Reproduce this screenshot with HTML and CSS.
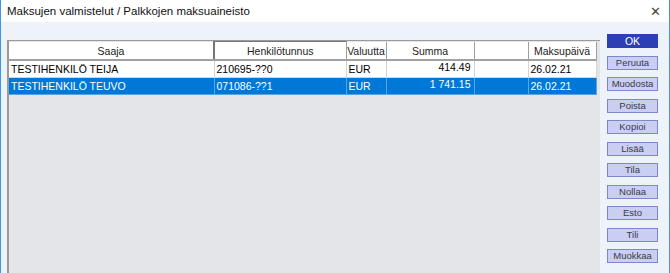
FILE: index.html
```html
<!DOCTYPE html>
<html lang="fi">
<head>
  <meta charset="UTF-8">
  <title>Maksujen valmistelut / Palkkojen maksuaineisto</title>
  <link rel="stylesheet" href="styles.css">
</head>
<body>
  <div class="window">
    <div class="titlebar">
      <span class="title">Maksujen valmistelut / Palkkojen maksuaineisto</span>
      <span class="close">✕</span>
    </div>
    <div class="content">
      <div class="grid">
        <table>
          <colgroup>
            <col style="width:205px">
            <col style="width:132px">
            <col style="width:40px">
            <col style="width:88px">
            <col style="width:54px">
            <col style="width:68px">
          </colgroup>
          <thead>
            <tr>
              <th>Saaja</th>
              <th class="active">Henkilötunnus</th>
              <th>Valuutta</th>
              <th>Summa</th>
              <th></th>
              <th>Maksupäivä</th>
            </tr>
          </thead>
          <tbody>
            <tr>
              <td>TESTIHENKILÖ TEIJA</td>
              <td>210695-??0</td>
              <td>EUR</td>
              <td class="num">414.49</td>
              <td></td>
              <td>26.02.21</td>
            </tr>
            <tr class="selected">
              <td>TESTIHENKILÖ TEUVO</td>
              <td>071086-??1</td>
              <td>EUR</td>
              <td class="num">1 741.15</td>
              <td></td>
              <td>26.02.21</td>
            </tr>
          </tbody>
        </table>
      </div>
      <div class="buttons">
        <button class="btn primary">OK</button>
        <button class="btn">Peruuta</button>
        <button class="btn">Muodosta</button>
        <button class="btn">Poista</button>
        <button class="btn">Kopioi</button>
        <button class="btn">Lisää</button>
        <button class="btn">Tila</button>
        <button class="btn">Nollaa</button>
        <button class="btn">Esto</button>
        <button class="btn">Tili</button>
        <button class="btn">Muokkaa</button>
      </div>
    </div>
  </div>
</body>
</html>
```

FILE: styles.css
```css
body {
  margin: 0;
  font-family: "Liberation Sans", Arial, sans-serif;
  font-size: 10.5px;
  color: #000;
}
.window {
  width: 670px;
  height: 273px;
  box-sizing: border-box;
  border-left: 1px solid #3c97e6;
  border-right: 1px solid #3c97e6;
  background-color: #eef2f9;
  overflow: hidden;
}
.titlebar {
  height: 22px;
  background-color: #fff;
  display: flex;
  align-items: center;
  justify-content: space-between;
  padding: 0 8px 0 6px;
}
.title {
  font-size: 11.5px;
  color: #111;
}
.close {
  font-size: 13px;
  color: #444;
}
.content {
  display: flex;
  padding-top: 12px;
  padding-left: 6px;
  height: 239px;
}
.grid {
  margin-top: 6px;
  width: 591px;
  background-color: #e3e5e9;
  border-left: 2px solid #9a9a9a;
  border-top: 1px solid #9a9a9a;
}
table {
  border-collapse: collapse;
  table-layout: fixed;
}
th {
  height: 16px;
  padding: 1px 0 0;
  font-weight: normal;
  color: #222;
  background-color: #fff;
  border-right: 1px solid #a0a0a0;
  border-bottom: 2px solid #a0a0a0;
  text-align: center;
  white-space: nowrap;
}
th.active {
  border-left: 2px solid #777;
  border-top: 1px solid #777;
}
td {
  height: 16px;
  padding: 0 2px;
  background-color: #fff;
  border-right: 1px solid #d4d4d4;
  border-bottom: 1px solid #d4d4d4;
  white-space: nowrap;
}
td.num {
  text-align: right;
  vertical-align: top;
  padding-right: 3px;
}
tr.selected td {
  background-color: #0078d7;
  color: #fff;
  border-color: #5aa4e6;
}
.buttons {
  display: flex;
  flex-direction: column;
  gap: 7.5px;
  margin-left: 7px;
}
.btn {
  box-sizing: border-box;
  width: 51px;
  height: 14px;
  padding: 0;
  font-family: "Liberation Sans", Arial, sans-serif;
  font-size: 9.5px;
  line-height: 12px;
  text-align: center;
  color: #3a3a4a;
  background-color: #c9cef2;
  border: 1px solid #7d88c9;
  border-radius: 0;
  overflow: hidden;
}
.btn.primary {
  background-color: #2c3fb5;
  border-color: #2c3fb5;
  color: #fff;
  font-size: 10.5px;
}
```
